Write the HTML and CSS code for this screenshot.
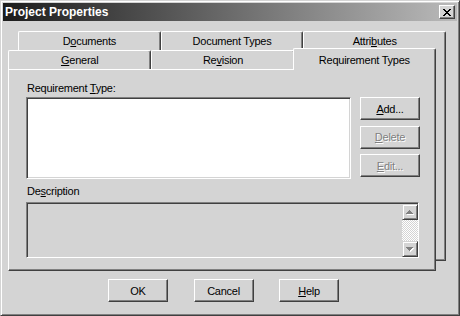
FILE: index.html
```html
<!DOCTYPE html>
<html lang="en">
<head>
    <meta charset="UTF-8">
    <meta name="viewport" content="width=device-width, initial-scale=1.0">
    <title>Project Properties</title>
    <link rel="stylesheet" href="styles.css">
</head>
<body>

    <div class="dialog">
        <div class="titlebar">
            <span class="title">Project Properties</span>
            <button type="button" class="close-btn" aria-label="Close">
                <svg width="8" height="7" viewBox="0 0 8 7" shape-rendering="crispEdges">
                    <path fill="#000" d="M0 0h2v1H0z M6 0h2v1H6z M1 1h2v1H1z M5 1h2v1H5z M2 2h4v1H2z M3 3h2v1H3z M2 4h4v1H2z M1 5h2v1H1z M5 5h2v1H5z M0 6h2v1H0z M6 6h2v1H6z"/>
                </svg>
            </button>
        </div>

        <div class="sheet">
            <div class="tab-row">
                <div class="tab">D<u>o</u>cuments</div>
                <div class="tab">Document Types</div>
                <div class="tab">Attri<u>b</u>utes</div>
            </div>
            <div class="sheet-body">
                <div class="front">
                    <div class="tab-row">
                        <div class="tab"><u>G</u>eneral</div>
                        <div class="tab">Re<u>v</u>ision</div>
                        <div class="tab active">Requirement Types</div>
                    </div>
                    <div class="panel">
                        <label class="field-label">Requirement <u>T</u>ype:</label>
                        <div class="list-row">
                            <div class="listbox"></div>
                            <div class="side-buttons">
                                <button type="button" class="btn"><u>A</u>dd...</button>
                                <button type="button" class="btn" disabled><u>D</u>elete</button>
                                <button type="button" class="btn" disabled><u>E</u>dit...</button>
                            </div>
                        </div>
                        <label class="field-label desc-label">De<u>s</u>cription</label>
                        <div class="desc-box">
                            <div class="scrollbar">
                                <div class="scroll-btn">
                                    <svg width="8" height="5" viewBox="0 0 8 5" shape-rendering="crispEdges">
                                        <path fill="#fff" transform="translate(1 1)" d="M3 0h1v1H3z M2 1h3v1H2z M1 2h5v1H1z M0 3h7v1H0z"/>
                                        <path fill="#808080" d="M3 0h1v1H3z M2 1h3v1H2z M1 2h5v1H1z M0 3h7v1H0z"/>
                                    </svg>
                                </div>
                                <div class="scroll-track"></div>
                                <div class="scroll-btn">
                                    <svg width="8" height="5" viewBox="0 0 8 5" shape-rendering="crispEdges">
                                        <path fill="#fff" transform="translate(1 1)" d="M0 0h7v1H0z M1 1h5v1H1z M2 2h3v1H2z M3 3h1v1H3z"/>
                                        <path fill="#808080" d="M0 0h7v1H0z M1 1h5v1H1z M2 2h3v1H2z M3 3h1v1H3z"/>
                                    </svg>
                                </div>
                            </div>
                        </div>
                    </div>
                </div>
            </div>
        </div>

        <div class="dialog-buttons">
            <button type="button" class="btn">OK</button>
            <button type="button" class="btn">Cancel</button>
            <button type="button" class="btn"><u>H</u>elp</button>
        </div>
    </div>

</body>
</html>
```

FILE: styles.css
```css
body {
    margin: 0;
    padding: 0;
    background-color: #d4d4d4;
    font-family: "Liberation Sans", Arial, sans-serif;
    font-size: 11px;
    letter-spacing: -0.25px;
    color: #000;
}
.dialog {
    width: 460px;
    height: 316px;
    box-sizing: border-box;
    background-color: #d4d4d4;
    border: 1px solid;
    border-color: #d4d4d4 #404040 #404040 #d4d4d4;
    box-shadow: inset 1px 1px #fff, inset -1px -1px #808080;
    padding: 2px;
}
.titlebar {
    height: 18px;
    display: flex;
    align-items: center;
    justify-content: space-between;
    padding: 0 2px;
    background: linear-gradient(to right, #1c1c1c, #bababa);
}
.title {
    color: #fff;
    font-weight: bold;
    font-size: 12px;
    letter-spacing: 0;
}
.close-btn {
    width: 16px;
    height: 14px;
    box-sizing: border-box;
    padding: 0;
    display: flex;
    align-items: center;
    justify-content: center;
    background-color: #d4d4d4;
    border: 1px solid;
    border-color: #fff #404040 #404040 #fff;
    box-shadow: inset -1px -1px #808080;
}
.sheet {
    width: 428px;
    margin: 10px 0 0 15px;
}
.tab-row {
    display: flex;
    height: 19px;
}
.tab {
    flex: 1;
    box-sizing: border-box;
    padding-top: 3px;
    line-height: 13px;
    text-align: center;
    white-space: nowrap;
    background-color: #d4d4d4;
    border-top: 1px solid #fff;
    border-left: 1px solid #fff;
    border-right: 1px solid #404040;
    border-radius: 2px 2px 0 0;
    box-shadow: inset -1px 0 #808080;
}
.tab.active {
    position: relative;
    z-index: 1;
    height: 22px;
    margin: -2px 0 -1px -2px;
    padding-top: 5px;
}
.sheet-body {
    box-sizing: border-box;
    border-left: 1px solid #fff;
    border-right: 1px solid #404040;
    border-bottom: 1px solid #404040;
    box-shadow: inset -1px -1px #808080;
}
.front {
    width: 428px;
    margin: 0 0 -11px -11px;
}
.panel {
    height: 202px;
    box-sizing: border-box;
    padding: 12px 0 0 17px;
    background-color: #d4d4d4;
    border: 1px solid;
    border-color: #fff #404040 #404040 #fff;
    box-shadow: inset -1px -1px #808080;
}
.field-label {
    display: block;
    line-height: 13px;
    padding-left: 1px;
}
.list-row {
    display: flex;
    gap: 9px;
    margin-top: 2px;
}
.listbox {
    width: 325px;
    height: 82px;
    box-sizing: border-box;
    background-color: #fff;
    border: 1px solid;
    border-color: #808080 #fff #fff #808080;
    box-shadow: inset 1px 1px #404040, inset -1px -1px #d4d4d4;
}
.side-buttons {
    display: flex;
    flex-direction: column;
    gap: 5.5px;
}
.btn {
    width: 60px;
    height: 23px;
    box-sizing: border-box;
    padding: 0;
    font-family: inherit;
    font-size: 11px;
    letter-spacing: -0.25px;
    color: #000;
    background-color: #d4d4d4;
    border: 1px solid;
    border-color: #fff #404040 #404040 #fff;
    box-shadow: inset -1px -1px #808080;
}
.btn:disabled {
    color: #808080;
    text-shadow: 1px 1px #fff;
}
.desc-label {
    margin-top: 6px;
}
.desc-box {
    width: 393px;
    height: 56px;
    margin-top: 4px;
    box-sizing: border-box;
    display: flex;
    justify-content: flex-end;
    background-color: #d4d4d4;
    border: 1px solid;
    border-color: #808080 #fff #fff #808080;
    box-shadow: inset 1px 1px #404040, inset -1px -1px #d4d4d4;
}
.scrollbar {
    width: 16px;
    display: flex;
    flex-direction: column;
    margin: 1px 0 0;
}
.scroll-btn {
    height: 16px;
    box-sizing: border-box;
    display: flex;
    align-items: center;
    justify-content: center;
    background-color: #d4d4d4;
    border: 1px solid;
    border-color: #d4d4d4 #404040 #404040 #d4d4d4;
    box-shadow: inset 1px 1px #fff, inset -1px -1px #808080;
}
.scroll-track {
    flex: 1;
    background: repeating-conic-gradient(#fff 0 25%, #d4d4d4 0 50%) 0 0 / 2px 2px;
}
.dialog-buttons {
    display: flex;
    gap: 25.5px;
    margin: 18px 0 0 105px;
}
```
